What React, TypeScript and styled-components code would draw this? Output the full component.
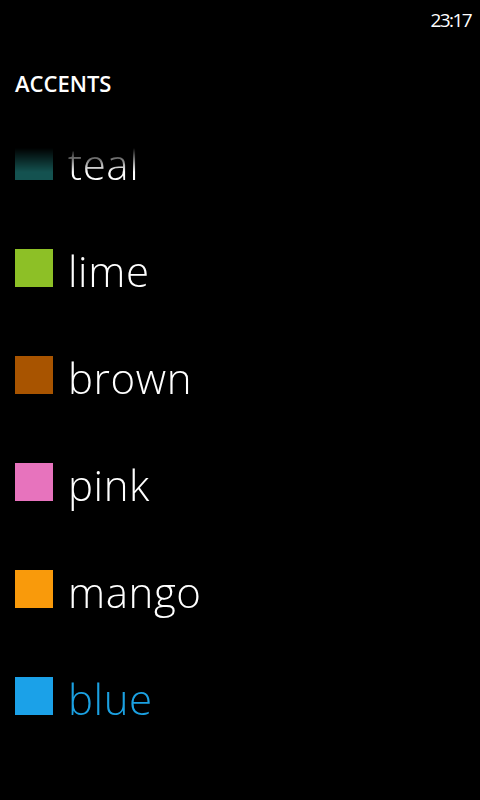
import React from "react";
import styled, { createGlobalStyle } from "styled-components";

const GlobalStyle = createGlobalStyle`
  html, body {
    margin: 0;
    padding: 0;
    background: #000;
  }
  body {
    font-family: "Open Sans", "Noto Sans", sans-serif;
    color: #fff;
  }
`;

const Page = styled.div`
  width: 480px;
  height: 800px;
  background: #000;
  overflow: hidden;
  display: flex;
  flex-direction: column;
`;

const StatusBar = styled.div`
  height: 40px;
  display: flex;
  justify-content: flex-end;
  align-items: flex-start;
  padding-right: 9px;
`;

const Clock = styled.span`
  font-family: "Open Sans", sans-serif;
  font-size: 19px;
  font-weight: 400;
  line-height: 40px;
  letter-spacing: -1.6px;
  color: #fff;
`;

const Header = styled.h1`
  margin: 28px 0 12px 15px;
  font-family: "Open Sans", sans-serif;
  font-size: 22px;
  font-weight: 600;
  line-height: 30px;
  color: #fff;
`;

const List = styled.div`
  display: flex;
  flex-direction: column;
  -webkit-mask-image: linear-gradient(to bottom, transparent 38px, #000 62px);
  mask-image: linear-gradient(to bottom, transparent 38px, #000 62px);
`;

const Row = styled.div`
  height: 107px;
  display: flex;
  align-items: baseline;
  padding-left: 15px;
`;

const Swatch = styled.span<{ $color: string }>`
  display: inline-block;
  width: 38px;
  height: 38px;
  background: ${(p) => p.$color};
  margin-right: 15px;
  flex: none;
`;

const Label = styled.span<{ $active?: boolean }>`
  font-family: "Open Sans", sans-serif;
  font-size: 42px;
  font-weight: 300;
  line-height: 107px;
  letter-spacing: 0.6px;
  color: ${(p) => (p.$active ? "#1ba1e2" : "#fff")};
`;

const accents = [
  { name: "teal", color: "#145250" },
  { name: "lime", color: "#8dc026" },
  { name: "brown", color: "#a85400" },
  { name: "pink", color: "#e773bd" },
  { name: "mango", color: "#f99a0b" },
  { name: "blue", color: "#1ba1e8", active: true },
];

export default function App() {
  return (
    <>
      <GlobalStyle />
      <Page>
        <StatusBar>
          <Clock>23:17</Clock>
        </StatusBar>
        <Header>ACCENTS</Header>
        <List>
          {accents.map((a) => (
            <Row key={a.name}>
              <Swatch $color={a.color} />
              <Label $active={a.active}>{a.name}</Label>
            </Row>
          ))}
        </List>
      </Page>
    </>
  );
}
